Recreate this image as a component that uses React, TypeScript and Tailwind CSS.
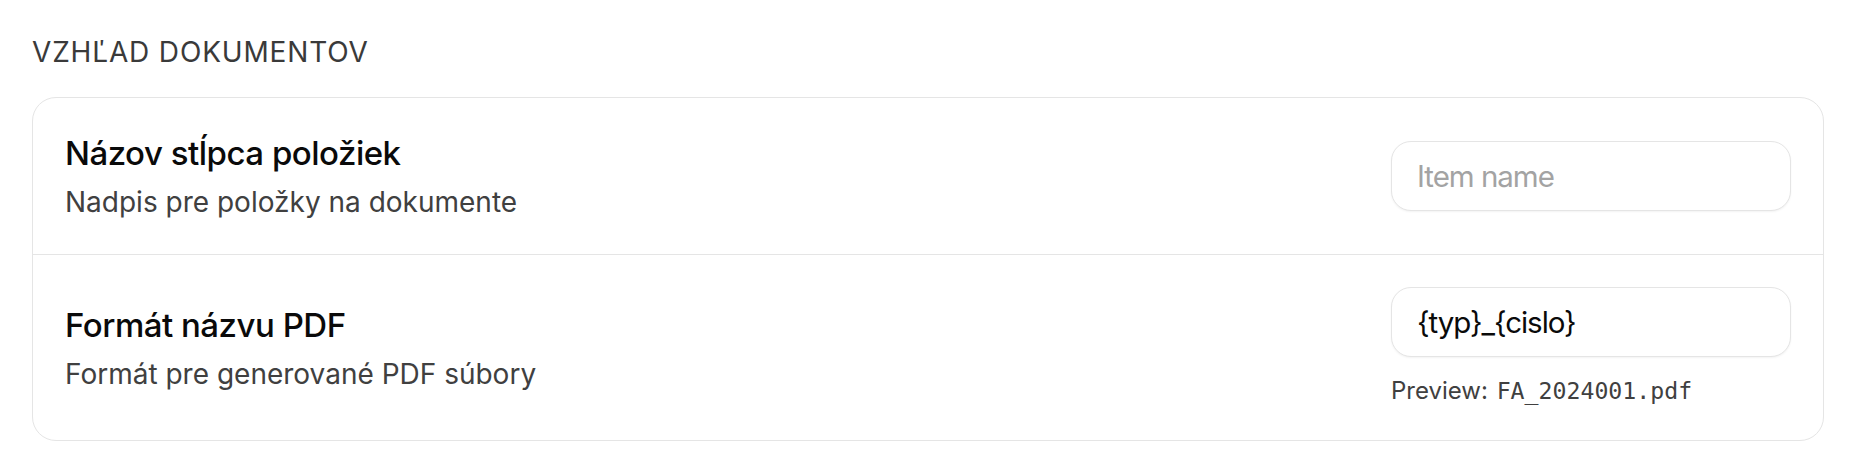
import React from "react";

export default function App() {
  return (
    <div className="min-h-screen bg-white px-[32px] pt-[32px]" style={{ fontFamily: "Inter, 'Noto Sans', sans-serif" }}>
      <h2 className="text-[28px] leading-[40px] font-normal uppercase tracking-[0.03em] text-[#3a3a3a]">
        Vzhľad dokumentov
      </h2>
      <div className="mt-[25px] rounded-[24px] border border-[#e5e5e5] bg-white">
        <div className="flex items-center justify-between px-[32px] py-[32px] border-b border-[#e5e5e5]">
          <div className="flex flex-col gap-[6px]">
            <div className="text-[33px] leading-[47px] font-medium tracking-[-0.015em] text-[#0a0a0a]">Názov stĺpca položiek</div>
            <div className="text-[28px] leading-[39px] text-[#404040]">Nadpis pre položky na dokumente</div>
          </div>
          <input
            placeholder="Item name"
            className="w-[400px] h-[70px] rounded-[20px] border border-[#e5e5e5] bg-white px-[25px] text-[29.5px] tracking-[-0.035em] text-[#0a0a0a] placeholder:text-[#a3a3a3] shadow-[0_1px_2px_rgba(0,0,0,0.05)] outline-none"
          />
        </div>
        <div className="flex items-center justify-between px-[32px] py-[32px]">
          <div className="flex flex-col gap-[6px]">
            <div className="text-[33px] leading-[47px] font-medium tracking-[-0.015em] text-[#0a0a0a]">Formát názvu PDF</div>
            <div className="text-[28px] leading-[39px] text-[#404040]">Formát pre generované PDF súbory</div>
          </div>
          <div className="flex flex-col w-[400px]">
            <input
              defaultValue="{typ}_{cislo}"
              className="w-[400px] h-[70px] rounded-[20px] border border-[#e5e5e5] bg-white px-[25px] text-[29.5px] tracking-[-0.035em] text-[#0a0a0a] shadow-[0_1px_2px_rgba(0,0,0,0.05)] outline-none"
            />
            <div className="mt-[16px] text-[24px] leading-[35px] text-[#404040]">
              Preview:{" "}
              <span className="ml-[2px] text-[23.2px]" style={{ fontFamily: "'DejaVu Sans Mono', 'Liberation Mono', monospace" }}>
                FA_2024001.pdf
              </span>
            </div>
          </div>
        </div>
      </div>
    </div>
  );
}
